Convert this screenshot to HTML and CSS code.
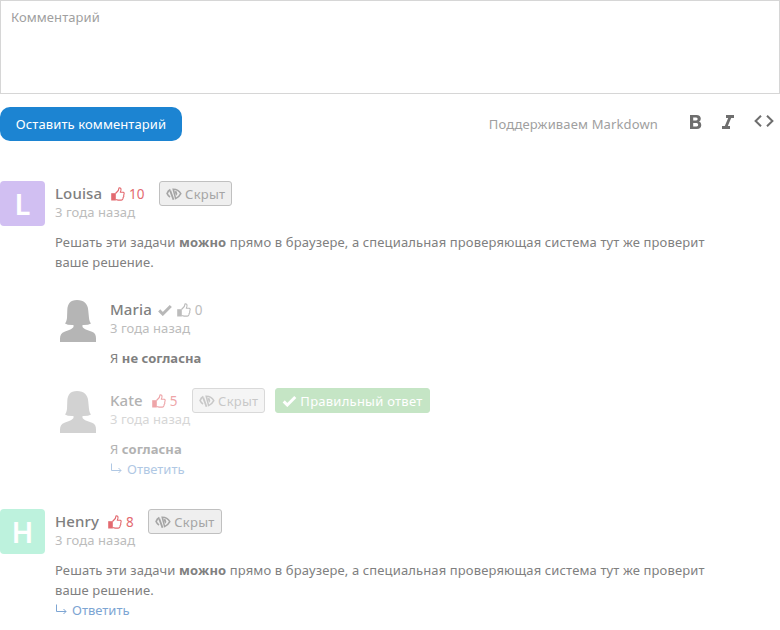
FILE: index.html
```
<!DOCTYPE html>
<html lang="ru">
<head>
<meta charset="utf-8">
<title>Комментарии</title>
<link rel="stylesheet" href="styles.css">
</head>
<body>
<svg class="sprite" aria-hidden="true">
  <symbol id="thumb" viewBox="0 0 14 14"><path fill="currentColor" d="M.2 6.200h4.600v7.300H.2z"/><path d="M4.500 6.500 7.300 3.500 8 .8Q10.500.6 9.900 3.400L9.300 5.300h2.900q1.400.4.800 1.800l-.3 1.300.1 1.100-.7 1.100-.2 1.300q-.4 1.200-1.600 1.200H7.200L4.500 12.500" fill="none" stroke="currentColor" stroke-width="1.100" stroke-linejoin="round"/></symbol>
  <symbol id="hidden" viewBox="0 0 16 14"><path d="M4.400 2.600Q2 4 1.100 6.500 2 8.700 4 9.900" fill="none" stroke="currentColor" stroke-width="1.700"/><path d="m4.200 3.600 3.300 9.200" fill="none" stroke="currentColor" stroke-width="1.800"/><path d="M7.200 2.200q5.300.1 7.600 4.500-1.800 3.600-5.200 4.900z" fill="none" stroke="currentColor" stroke-width="1.500"/><path fill="currentColor" d="m8.400 3.900 2.200.3q1.500 2.300-.5 4.600z"/></symbol>
  <symbol id="check" viewBox="0 0 14 12"><path d="m1.200 6.400 3.600 3.600L12.800 2" fill="none" stroke="currentColor" stroke-width="3"/></symbol>
  <symbol id="reply" viewBox="0 0 12 12"><path d="M1.500.5v7H11M8.500 5 11 7.500 8.500 10" fill="none" stroke="currentColor"/></symbol>
  <symbol id="woman" viewBox="0 0 36 42"><path fill="currentColor" d="M17 0c7 0 10.800 4 11.200 10l.8 8c.2 2.800 1 4.200 2 5.500q-2.700 1.700-8.500 1.500v2c1.500 2.500 6 3.300 9.500 4.800 3 1.300 4 3.300 4 6.700V42H0v-3.500c0-3.400 1.500-5.400 4.500-6.700C8 30.300 12 29.500 13.500 27v-2Q7.500 25.200 5 23.500c1-1.500 1.700-2.800 2-5.500l.3-8C7.700 4 10 0 17 0z"/></symbol>
</svg>
<main class="comments">
  <form class="editor">
    <textarea class="input" placeholder="Комментарий"></textarea>
    <div class="bar">
      <button class="submit" type="button">Оставить комментарий</button>
      <span class="hint">Поддерживаем Markdown</span>
      <span class="tools">
        <svg width="12" height="14" viewBox="0 0 12 14"><path fill="currentColor" fill-rule="evenodd" d="M0 0h6.500q4.200.2 4.300 3.700 0 1.900-1.700 2.900 2.200.9 2.200 3.400-.2 3.800-4.400 4H0zm3.200 2.500V5.500h3Q7.600 5.300 7.700 4 7.600 2.600 6.200 2.500zm0 5.500v3.500h3.400q1.600-.2 1.600-1.700Q8.100 8.200 6.600 8z"/></svg>
        <svg width="12" height="14" viewBox="0 0 12 14"><path fill="currentColor" d="M4 0h8v3H9.200L5.800 11H8v3H0v-3h2.800L6.200 3H4z"/></svg>
        <svg class="code" width="20" height="12" viewBox="0 0 20 12"><path d="M7 .7 1.600 6 7 11.300M13 .7 18.400 6 13 11.300" fill="none" stroke="currentColor" stroke-width="2"/></svg>
      </span>
    </div>
  </form>

  <article class="comment first">
    <div class="avatar violet">L</div>
    <div class="body">
      <header class="head"><span class="name">Louisa</span><span class="likes red"><svg class="thumb"><use href="#thumb"/></svg><span>10</span></span><span class="badge"><svg class="eye"><use href="#hidden"/></svg>Скрыт</span></header>
      <div class="date">3 года назад</div>
      <p class="text long">Решать эти задачи <b>можно</b> прямо в браузере, а специальная проверяющая система тут же проверит<br>ваше решение.</p>
    </div>
  </article>

  <section class="replies">
    <article class="comment">
      <div class="avatar photo"><svg><use href="#woman"/></svg></div>
      <div class="body">
        <header class="head"><span class="name">Maria</span><svg class="tick"><use href="#check"/></svg><span class="likes gray"><svg class="thumb"><use href="#thumb"/></svg><span>0</span></span></header>
        <div class="date">3 года назад</div>
        <p class="text">Я <b>не согласна</b></p>
      </div>
    </article>
    <article class="comment faded">
      <div class="avatar photo"><svg><use href="#woman"/></svg></div>
      <div class="body">
        <header class="head"><span class="name">Kate</span><span class="likes red"><svg class="thumb"><use href="#thumb"/></svg><span>5</span></span><span class="badge"><svg class="eye"><use href="#hidden"/></svg>Скрыт</span><span class="badge correct"><svg class="mark"><use href="#check"/></svg>Правильный ответ</span></header>
        <div class="date">3 года назад</div>
        <p class="text">Я <b>согласна</b></p>
        <a class="reply"><svg><use href="#reply"/></svg>Ответить</a>
      </div>
    </article>
  </section>

  <article class="comment last">
    <div class="avatar mint">H</div>
    <div class="body">
      <header class="head"><span class="name">Henry</span><span class="likes red"><svg class="thumb"><use href="#thumb"/></svg><span>8</span></span><span class="badge"><svg class="eye"><use href="#hidden"/></svg>Скрыт</span></header>
      <div class="date">3 года назад</div>
      <p class="text long">Решать эти задачи <b>можно</b> прямо в браузере, а специальная проверяющая система тут же проверит<br>ваше решение.</p>
      <a class="reply"><svg><use href="#reply"/></svg>Ответить</a>
    </div>
  </article>
</main>
</body>
</html>
```
FILE: styles.css
```
* { box-sizing: border-box; }
body { margin: 0; background: #fff; color: #808080; font: 13px/20px "Noto Sans", "Open Sans", sans-serif; }
svg { display: block; flex: none; }
.sprite { display: none; }
.comments { width: 780px; }
.editor { display: block; }
.input { display: block; width: 100%; height: 94px; padding: 6px 10px; border: 1px solid #d6d6d6; resize: none; outline: none; font: inherit; letter-spacing: .08px; }
.input::placeholder { color: #a0a0a0; opacity: 1; }
.bar { display: flex; align-items: center; height: 34px; margin-top: 13px; }
.submit { width: 182px; height: 34px; padding: 0; border: 0; border-radius: 10px; background: #1c84d2; color: #fff; font: inherit; letter-spacing: .1px; }
.hint { margin-left: auto; color: #a0a0a0; letter-spacing: .14px; }
.tools { display: flex; align-items: center; gap: 20px; margin: -5px 6px 0 32px; color: #6e6e6e; }
.code { margin: -2px 0 0 0; }
.comment { display: flex; }
.first { margin-top: 40px; }
.last { margin-top: 30px; }
.avatar { flex: none; width: 45px; height: 45px; margin-right: 10px; border-radius: 4px; color: #fff; font-size: 29px; font-weight: 600; line-height: 45px; text-align: center; }
.violet { background: #d1bff2; }
.mint { background: #bdf2dd; }
.photo { padding: 3px 0 0 5px; color: #b5b5b5; }
.photo svg { width: 36px; height: 42px; }
.head { display: flex; align-items: center; height: 25px; }
.name { font-size: 15px; font-weight: 500; line-height: 20px; padding-bottom: 2px; letter-spacing: .1px; }
.likes { display: flex; align-items: center; gap: 4px; margin-left: 9px; font-size: 13.500px; }
.red { color: #e36a70; }
.gray { margin-left: 5px; color: #bcbcbc; }
.thumb { width: 14px; height: 14px; }
.tick { width: 14px; height: 12px; margin-left: 6px; color: #b8b8b8; }
.badge { display: flex; align-items: center; gap: 3px; height: 25px; margin-left: 14.500px; padding: 0 6px; border: 1px solid #c0c0c0; border-radius: 3px; background: #efefef; color: #a5a5a5; letter-spacing: .25px; }
.eye { width: 16px; height: 14px; }
.correct { margin-left: 10px; border-color: #9fd4a0; background: #9fd4a0; color: #fff; }
.mark { width: 15px; height: 12px; }
.date { height: 13px; color: #bcbcbc; line-height: 13px; letter-spacing: .08px; }
.text { margin: 13px 0 0; white-space: nowrap; letter-spacing: .06px; }
.long { letter-spacing: .13px; }
.replies { display: grid; gap: 20px; margin: 25px 0 0 55px; }
.faded > * { opacity: .6; }
.reply { display: flex; align-items: center; gap: 5px; color: #7da5d3; }
.reply svg { width: 12px; height: 12px; }
```
